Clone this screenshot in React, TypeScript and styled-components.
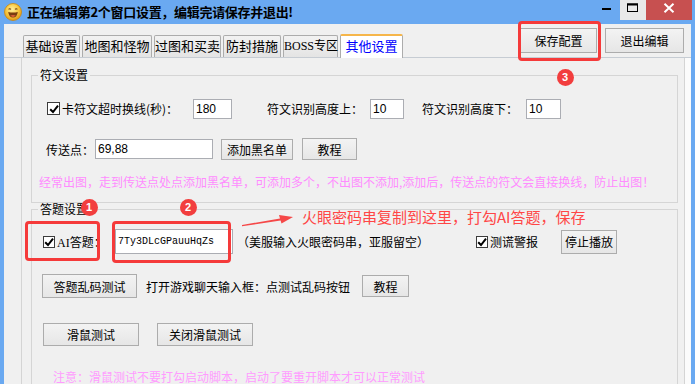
import React from "react";
import styled, { createGlobalStyle } from "styled-components";

const Global = createGlobalStyle`
  html, body { margin: 0; padding: 0; background: #6aa9f1; overflow: hidden; }
  body {
    font-family: "Noto Sans CJK SC", "Noto Sans", sans-serif;
    font-size: 12px;
    color: #000;
  }
  * { box-sizing: border-box; }
`;

const CJK = `"Noto Sans CJK SC", "Noto Sans", sans-serif`;

const Window = styled.div`
  position: relative;
  width: 695px;
  height: 384px;
  background: #6aa9f1;
  display: flex;
  flex-direction: column;
`;

const TitleBar = styled.div`
  height: 24px;
  flex-shrink: 0;
  display: flex;
  align-items: flex-start;
  padding-right: 3px;
`;

const AppIcon = styled.svg`
  margin: 3px 0 0 4px;
  width: 18px;
  height: 18px;
  flex-shrink: 0;
`;

const Title = styled.div`
  flex: 1;
  padding-left: 5px;
  font-size: 13px;
  font-weight: 700;
  line-height: 24px;
  letter-spacing: -0.3px;
  white-space: nowrap;
`;

const WinBtn = styled.div<{ $kind: "min" | "max" | "close" }>`
  width: ${(p) => (p.$kind === "close" ? 46 : p.$kind === "max" ? 26 : 27)}px;
  height: 20px;
  flex-shrink: 0;
  background-color: ${(p) =>
    p.$kind === "close" ? "#c75050" : p.$kind === "max" ? "#e9e9e9" : "#6aa9f1"};
  display: flex;
  justify-content: center;
  padding-top: 3px;
`;

const Body = styled.div`
  flex: 1;
  min-height: 0;
  overflow: hidden;
  display: flex;
  padding: 0 4px 0 4px;
`;

const Client = styled.div`
  flex: 1;
  min-width: 0;
  background: #f0f0f0;
  display: flex;
  flex-direction: column;
`;

const TabRow = styled.div`
  height: 33px;
  flex-shrink: 0;
  display: flex;
  align-items: flex-end;
  padding: 0 7px 0 19px;
`;

const Tabs = styled.div`
  display: flex;
  align-items: flex-end;
  gap: 2px;
`;

const Tab = styled.div<{ $w: number; $active?: boolean; $serif?: boolean }>`
  width: ${(p) => p.$w}px;
  height: ${(p) => (p.$active ? 24 : 22)}px;
  border: 1px solid #acacac;
  border-bottom: none;
  border-top: ${(p) => (p.$active ? "2px solid #f6b64a" : "1px solid #acacac")};
  border-radius: 2px 2px 0 0;
  background: ${(p) => (p.$active ? "#ffffff" : "linear-gradient(#f2f2f2, #e4e4e4)")};
  color: ${(p) => (p.$active ? "#0000ff" : "#000")};
  font-family: ${(p) => (p.$serif ? `"Liberation Serif", ${CJK}` : CJK)};
  font-size: ${(p) => (p.$serif ? 12 : 13)}px;
  line-height: 20px;
  text-align: center;
  white-space: nowrap;
  margin-bottom: ${(p) => (p.$active ? -1 : 0)}px;
  position: relative;
  z-index: ${(p) => (p.$active ? 2 : 1)};
`;

const TopButtons = styled.div`
  margin-left: auto;
  align-self: flex-start;
  margin-top: 4px;
  display: flex;
  gap: 8px;
`;

const Button = styled.div<{ $w: number; $h: number }>`
  width: ${(p) => p.$w}px;
  height: ${(p) => p.$h}px;
  flex-shrink: 0;
  border: 1px solid #acacac;
  background: linear-gradient(#f3f3f3, #e6e6e6);
  display: flex;
  align-items: center;
  justify-content: center;
  font-size: 12px;
  white-space: nowrap;
`;

const PanelArea = styled.div`
  flex: 1;
  min-height: 0;
  display: flex;
  border-top: 1px solid #c6ccd3;
`;

const Panel = styled.div`
  flex: 1;
  margin-left: 17px;
  border-left: 1px solid #d4d4d4;
  border-right: 1px solid #d4d4d4;
  background: #f0f0f0;
  padding: 11px 6px 0 9px;
  display: flex;
  flex-direction: column;
`;

const EdgeStrip = styled.div`
  width: 6px;
  background: #fbfbfb;
`;

const Group = styled.fieldset`
  margin: 0;
  padding: 0;
  border: 1px solid #d5d5d5;
  min-width: 0;
`;

const Legend = styled.legend`
  margin-left: 6px;
  padding: 0 2px;
  font-size: 12px;
  line-height: 12px;
`;

const GroupBody = styled.div<{ $pt: number; $pb: number }>`
  padding: ${(p) => p.$pt}px 0 ${(p) => p.$pb}px 0;
  display: flex;
  flex-direction: column;
`;

const Row = styled.div<{ $mt?: number; $pl: number; $h: number }>`
  display: flex;
  align-items: center;
  height: ${(p) => p.$h}px;
  margin-top: ${(p) => p.$mt ?? 0}px;
  padding-left: ${(p) => p.$pl}px;
  white-space: nowrap;
`;

const Cell = styled.div<{ $w?: number; $ml?: number; $serif?: boolean }>`
  display: flex;
  align-items: center;
  gap: 2px;
  flex-shrink: 0;
  ${(p) => (p.$w ? `width: ${p.$w}px;` : "")}
  margin-left: ${(p) => p.$ml ?? 0}px;
  font-family: ${(p) => (p.$serif ? `"Liberation Serif", ${CJK}` : CJK)};
`;

const Box = styled.span<{ $s: number }>`
  width: ${(p) => p.$s}px;
  height: ${(p) => p.$s}px;
  border: 1px solid #3c3c3c;
  background: #fff;
  display: inline-flex;
  align-items: center;
  justify-content: center;
  flex-shrink: 0;
`;

const TextBox = styled.input<{ $w: number; $h: number; $mono?: boolean }>`
  width: ${(p) => p.$w}px;
  height: ${(p) => p.$h}px;
  flex-shrink: 0;
  margin: 0;
  border: 1px solid #abadb3;
  background: #fff;
  padding: 0 0 0 2px;
  outline: none;
  color: #000;
  font-family: ${(p) => (p.$mono ? `"Liberation Mono", monospace` : `"Liberation Sans", sans-serif`)};
  font-size: ${(p) => (p.$mono ? 10 : 12)}px;
`;

const Hint = styled.div<{ $pl: number; $mt: number; $c: string }>`
  margin-top: ${(p) => p.$mt}px;
  padding-left: ${(p) => p.$pl}px;
  line-height: 16px;
  font-size: 12px;
  color: ${(p) => p.$c};
  white-space: nowrap;
`;

/* ---------- annotation overlays ---------- */
const RedBox = styled.div<{ $x: number; $y: number; $w: number; $h: number }>`
  position: absolute;
  left: ${(p) => p.$x}px;
  top: ${(p) => p.$y}px;
  width: ${(p) => p.$w}px;
  height: ${(p) => p.$h}px;
  border: 3px solid #f53a3a;
  border-radius: 4px;
  pointer-events: none;
`;

const Badge = styled.div<{ $x: number; $y: number }>`
  position: absolute;
  left: ${(p) => p.$x - 8.5}px;
  top: ${(p) => p.$y - 8.5}px;
  width: 17px;
  height: 17px;
  border-radius: 50%;
  background: #f23e3e;
  color: #fff;
  font-family: "Liberation Sans", sans-serif;
  font-weight: 700;
  font-size: 11px;
  line-height: 17px;
  text-align: center;
`;

const Arrow = styled.svg`
  position: absolute;
  left: 240px;
  top: 208px;
  width: 56px;
  height: 20px;
`;

const Callout = styled.div`
  position: absolute;
  left: 302px;
  top: 206px;
  font-size: 15px;
  line-height: 22px;
  color: #ff4646;
  white-space: nowrap;
`;

const Check = () => (
  <svg width="10" height="10" viewBox="0 0 10 10">
    <path d="M1.2 5.2 L4 8 L9 1.6" fill="none" stroke="#000" strokeWidth="2" />
  </svg>
);

const CheckBox = ({ s = 13 }: { s?: number }) => (
  <Box $s={s}>
    <Check />
  </Box>
);

export default function App() {
  return (
    <>
      <Global />
      <Window>
        <TitleBar>
          <AppIcon viewBox="0 0 18 18">
            <defs>
              <radialGradient id="face" cx="45%" cy="35%" r="65%">
                <stop offset="0%" stopColor="#fff0a0" />
                <stop offset="55%" stopColor="#f8c840" />
                <stop offset="100%" stopColor="#e39a18" />
              </radialGradient>
            </defs>
            <circle cx="9" cy="9" r="8.5" fill="url(#face)" stroke="#c9870f" strokeWidth="0.8" />
            <path d="M4.6 6.4 Q5.8 5.2 7 6.4" fill="none" stroke="#6b3a10" strokeWidth="1.1" />
            <path d="M11 6.4 Q12.2 5.2 13.4 6.4" fill="none" stroke="#6b3a10" strokeWidth="1.1" />
            <path d="M4.2 9 Q9 10 13.8 9 Q13 14.6 9 14.6 Q5 14.6 4.2 9 Z" fill="#7a3d10" />
            <path d="M6.2 12.6 Q9 11.2 11.8 12.6 Q10.6 14 9 14 Q7.4 14 6.2 12.6 Z" fill="#e0603a" />
          </AppIcon>
          <Title>正在编辑第2个窗口设置，编辑完请保存并退出!</Title>
          <WinBtn $kind="min">
            <svg width="10" height="10" viewBox="0 0 10 10">
              <rect x="0" y="5" width="9" height="2" fill="#000" />
            </svg>
          </WinBtn>
          <WinBtn $kind="max">
            <svg width="12" height="10" viewBox="0 0 12 10">
              <rect x="0.5" y="1" width="10" height="7.5" fill="none" stroke="#000" strokeWidth="1" />
              <rect x="0" y="0.5" width="11" height="2" fill="#000" />
            </svg>
          </WinBtn>
          <WinBtn $kind="close">
            <svg width="12" height="10" viewBox="0 0 12 10">
              <path d="M1.5 0.8 L10.5 9.2 M10.5 0.8 L1.5 9.2" stroke="#fff" strokeWidth="2" />
            </svg>
          </WinBtn>
        </TitleBar>

        <Body>
          <Client>
            <TabRow>
              <Tabs>
                <Tab $w={57}>基础设置</Tab>
                <Tab $w={70}>地图和怪物</Tab>
                <Tab $w={67}>过图和买卖</Tab>
                <Tab $w={58}>防封措施</Tab>
                <Tab $w={55} $serif>BOSS专区</Tab>
                <Tab $w={63} $active>
                  其他设置
                </Tab>
              </Tabs>
              <TopButtons>
                <Button $w={77} $h={25}>保存配置</Button>
                <Button $w={79} $h={25}>退出编辑</Button>
              </TopButtons>
            </TabRow>

            <PanelArea>
              <Panel>
                <Group>
                  <Legend>符文设置</Legend>
                  <GroupBody $pt={17} $pb={12}>
                    <Row $pl={15} $h={21}>
                      <Cell $w={146}>
                        <CheckBox />
                        <span>卡符文超时换线(秒)：</span>
                      </Cell>
                      <TextBox $w={39} $h={20} readOnly defaultValue="180" />
                      <Cell $w={103} $ml={35}>符文识别高度上：</Cell>
                      <TextBox $w={34} $h={20} readOnly defaultValue="10" />
                      <Cell $w={104} $ml={18}>符文识别高度下：</Cell>
                      <TextBox $w={35} $h={20} readOnly defaultValue="10" />
                    </Row>
                    <Row $pl={14} $mt={19} $h={22}>
                      <Cell $w={49}>传送点：</Cell>
                      <TextBox $w={118} $h={20} readOnly defaultValue="69,88" />
                      <Cell $ml={8}>
                        <Button $w={72} $h={21}>添加黑名单</Button>
                      </Cell>
                      <Cell $ml={9}>
                        <Button $w={55} $h={22}>教程</Button>
                      </Cell>
                    </Row>
                    <Hint $pl={7} $mt={14} $c="#ff8cff">
                      经常出图，走到传送点处点添加黑名单，可添加多个，不出图不添加,添加后，传送点的符文会直接换线，防止出图！
                    </Hint>
                  </GroupBody>
                </Group>

                <Group>
                  <Legend>答题设置</Legend>
                  <GroupBody $pt={14} $pb={40}>
                    <Row $pl={11} $h={25}>
                      <Cell $w={72} $serif>
                        <CheckBox s={12} />
                        <span>AI答题：</span>
                      </Cell>
                      <TextBox $w={118} $h={25} $mono readOnly defaultValue="7Ty3DLcGPauuHqZs" />
                      <Cell $w={227} $ml={4}>（美服输入火眼密码串，亚服留空）</Cell>
                      <Cell $w={85} $ml={12}>
                        <CheckBox s={12} />
                        <span>测谎警报</span>
                      </Cell>
                      <Button $w={56} $h={24}>停止播放</Button>
                    </Row>
                    <Row $pl={10} $mt={20} $h={24}>
                      <Button $w={95} $h={24}>答题乱码测试</Button>
                      <Cell $w={216} $ml={9}>打开游戏聊天输入框：点测试乱码按钮</Cell>
                      <Button $w={47} $h={22}>教程</Button>
                    </Row>
                    <Row $pl={11} $mt={25} $h={23}>
                      <Button $w={96} $h={23}>滑鼠测试</Button>
                      <Cell $ml={18}>
                        <Button $w={96} $h={23}>关闭滑鼠测试</Button>
                      </Cell>
                    </Row>
                    <Hint $pl={21} $mt={23} $c="#ff9cff">
                      注意：滑鼠测试不要打勾启动脚本，启动了要重开脚本才可以正常测试
                    </Hint>
                  </GroupBody>
                </Group>
              </Panel>
              <EdgeStrip />
            </PanelArea>
          </Client>
        </Body>

        <RedBox $x={518} $y={21} $w={83} $h={40} />
        <RedBox $x={25} $y={221} $w={75} $h={40} />
        <RedBox $x={112} $y={221} $w={119} $h={42} />
        <Badge $x={565} $y={77}>3</Badge>
        <Badge $x={89} $y={207}>1</Badge>
        <Badge $x={188} $y={207}>2</Badge>
        <Arrow viewBox="0 0 56 20">
          <polygon points="2,17 40,10.5 39,7 53,9 41.5,15.5 40.6,12.5 2,18.2" fill="#f54848" />
        </Arrow>
        <Callout>火眼密码串复制到这里，打勾AI答题，保存</Callout>
      </Window>
    </>
  );
}
